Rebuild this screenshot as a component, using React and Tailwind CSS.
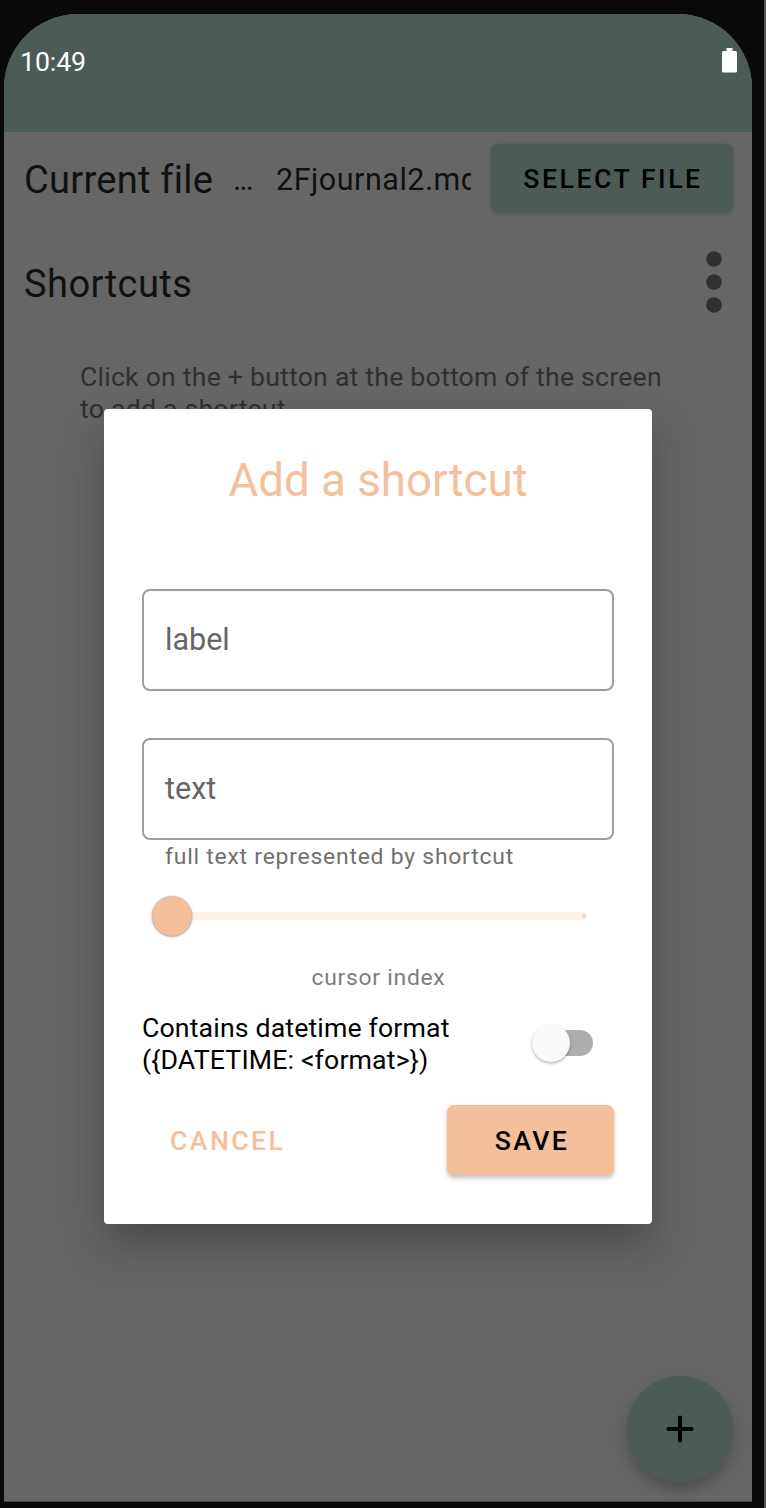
function StatusBar() {
  return (
    <header className="flex h-[118px] shrink-0 items-start justify-between bg-[#4d5b57] pl-4 pr-[15px] pt-[32px]">
      <span className="text-[26.7px] leading-8 tracking-[-0.1px] text-white">10:49</span>
      <svg className="mt-[2px] h-[25px] w-[15px]" viewBox="0 0 15 25" fill="#fff">
        <path d="M4.5 0h6v3h3a1.5 1.5 0 0 1 1.500 1.500v18.500a1.500 1.500 0 0 1-1.500 1.500h-12a1.500 1.500 0 0 1-1.500-1.500v-18.500a1.500 1.500 0 0 1 1.500-1.500h3z" />
      </svg>
    </header>
  );
}

function FileRow() {
  return (
    <div className="flex h-24 shrink-0 items-center pl-5 pr-[19px]">
      <span className="w-[209px] whitespace-nowrap text-[38.1px] leading-[46px] tracking-[0.25px] text-[#111]">Current file</span>
      <span className="w-[43px] text-[30.5px] leading-9 text-[#111]">…</span>
      <span className="w-[195px] overflow-hidden whitespace-nowrap text-[30.5px] leading-9 tracking-[0.52px] text-[#111]">2Fjournal2.md</span>
      <button className="mb-1 ml-auto flex h-[69px] w-[242px] items-center justify-center rounded-[7px] bg-[#4d5b57] pl-[2px] pt-[2px] text-[26.7px] font-medium tracking-[2.5px] text-black shadow-[0_1px_4px_rgba(0,0,0,0.2)]">
        SELECT FILE
      </button>
    </div>
  );
}

function Field({ name }) {
  return (
    <div className="flex h-[102px] shrink-0 items-center rounded-[8px] border-2 border-[#9e9e9e] px-[21px] text-[30.5px] text-[#666]">
      {name}
    </div>
  );
}

function Slider() {
  return (
    <div className="mt-[24px] flex h-[41px] shrink-0 items-center pl-[10px]">
      <span className="z-10 size-[40px] rounded-full bg-[#f4bf9b] shadow-[0_0.5px_2px_rgba(0,0,0,0.5)]" />
      <span className="-ml-5 flex h-2 w-[415px] items-center justify-end rounded-r-[4px] bg-[#fdf0e7] pr-[1px]">
        <span className="size-1 rounded-full bg-[#f9d5bd]" />
      </span>
    </div>
  );
}

function Switch() {
  return (
    <div className="mb-[2px] mr-[21px] flex h-[40px] w-[62px] items-center">
      <span className="z-10 ml-[1px] size-[38px] shrink-0 rounded-full bg-[#fafafa] shadow-[0_1.5px_3px_rgba(0,0,0,0.3)]" />
      <span className="-ml-[25px] h-[26px] w-12 rounded-full bg-[#adadad]" />
    </div>
  );
}

function ShortcutDialog() {
  return (
    <section className="absolute left-[100px] top-[395px] flex h-[815px] w-[548px] flex-col rounded-[4px] bg-white px-[38px] shadow-[0_22px_44px_rgba(0,0,0,0.27)]">
      <h1 className="mt-[45px] h-[54px] text-center text-[45.7px] leading-[54px] text-[#f4bf9b]">Add a shortcut</h1>
      <div className="mt-[81px] flex flex-col gap-[47px]">
        <Field name="label" />
        <Field name="text" />
      </div>
      <p className="pl-[23px] pt-[3px] text-[22.9px] leading-[28px] tracking-[0.78px] text-[#707070]">full text represented by shortcut</p>
      <Slider />
      <p className="mt-[28px] pl-[1px] text-center text-[22.9px] leading-[28px] tracking-[0.72px] text-[#7d7d7d]">cursor index</p>
      <div className="mt-5 flex items-center justify-between">
        <p className="whitespace-nowrap text-[26.7px] leading-8 tracking-[0.14px] text-black">
          Contains datetime format
          <br />
          {"({DATETIME: <format>})"}
        </p>
        <Switch />
      </div>
      <div className="mt-[29px] flex h-[70px] items-center justify-between text-[26.7px] font-medium tracking-[2.38px]">
        <button className="pl-7 pt-[2px] text-[#f4bf9b]">CANCEL</button>
        <button className="h-[70px] w-[167px] rounded-[7px] bg-[#f4bf9b] pl-[3px] pt-[2px] text-black shadow-[0_3px_4px_rgba(0,0,0,0.25)]">SAVE</button>
      </div>
    </section>
  );
}

export default function App() {
  return (
    <div className="flex h-[1508px] w-[766px] flex-col border-r-[2px] border-[#555] bg-[#09080a] pl-1 pr-3 pt-[14px] font-['Roboto',sans-serif]">
      <div className="relative flex h-[1488px] w-[748px] flex-col overflow-hidden rounded-t-[74px] border-b border-[#484848] bg-[#666]">
        <StatusBar />
        <FileRow />
        <div className="mt-[12px] flex h-[86px] shrink-0 items-center justify-between pl-5 pr-[30px]">
          <h2 className="pt-[2px] text-[38.1px] leading-[46px] tracking-[0.4px] text-[#111]">Shortcuts</h2>
          <svg className="mb-[3px] h-[62px] w-4" viewBox="0 0 16 62" fill="#303030">
            <circle cx="8" cy="8" r="7.8" />
            <circle cx="8" cy="31" r="7.800" />
            <circle cx="8" cy="54" r="7.800" />
          </svg>
        </div>
        <p className="mt-[36px] whitespace-nowrap pl-[76px] text-[26.7px] leading-[31.5px] tracking-[0.2px] text-[#303030]">
          Click on the + button at the bottom of the screen
          <br />
          to add a shortcut.
        </p>
        <button className="absolute bottom-[19px] right-[19px] flex size-[106px] items-center justify-center rounded-full bg-[#4d5b57] shadow-[0_8px_16px_rgba(0,0,0,0.25)]">
          <svg className="size-[28px]" viewBox="0 0 28 28" stroke="#000" strokeWidth="4" strokeLinecap="round">
            <path d="M14 2.500v23M2.500 14h23" />
          </svg>
        </button>
        <ShortcutDialog />
      </div>
    </div>
  );
}
